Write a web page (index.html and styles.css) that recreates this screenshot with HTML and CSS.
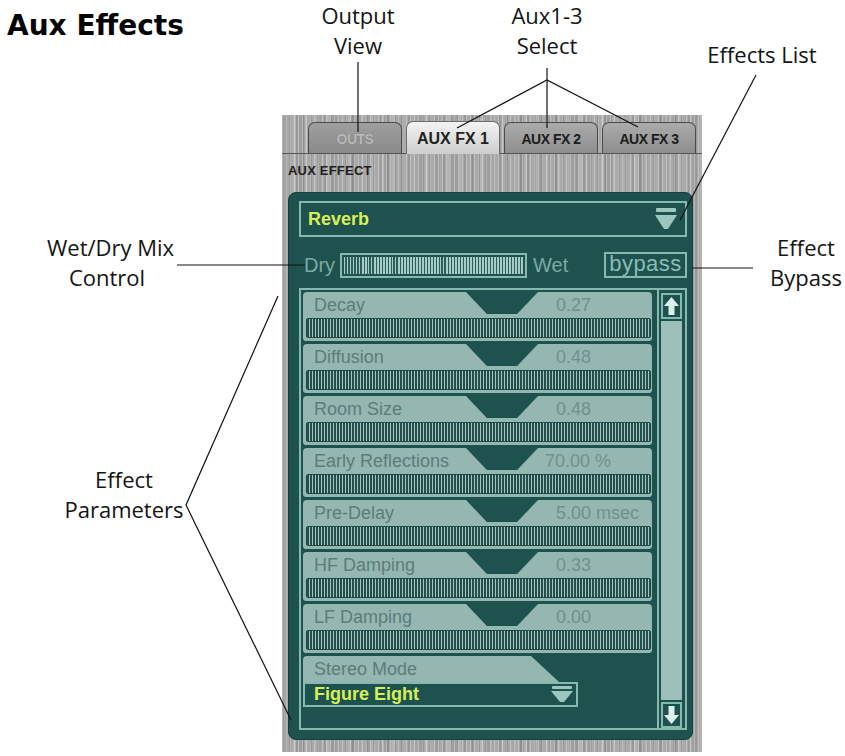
FILE: index.html
```html
<!DOCTYPE html>
<html>
<head>
<meta charset="utf-8">
<title>Aux Effects</title>
<link rel="stylesheet" href="styles.css">
</head>
<body>
<div class="page">
  <h1 class="title">Aux Effects</h1>

  <div class="mixer">
    <div class="tabs">
      <div class="tab outs">OUTS</div>
      <div class="tab active">AUX FX 1</div>
      <div class="tab">AUX FX 2</div>
      <div class="tab">AUX FX 3</div>
    </div>
    <div class="aux-label">AUX EFFECT</div>

    <div class="fx">
      <div class="select">
        <span class="select-text">Reverb</span>
        <svg class="drop" width="22" height="23" viewBox="0 0 22 23"><rect x="1" y="0" width="20" height="4" rx="1"/><polygon points="0,7 22,7 13,21 9,21"/></svg>
      </div>

      <div class="mix">
        <span class="mix-text dry">Dry</span>
        <div class="mix-slider"><div class="mix-stripes"></div></div>
        <span class="mix-text wet">Wet</span>
        <div class="bypass">bypass</div>
      </div>

      <div class="list">
        <div class="params">
          <div class="param">
            <div class="param-head"><span class="name">Decay</span><span class="notch"></span><span class="val">0.27</span></div>
            <div class="bar"></div>
          </div>
          <div class="param">
            <div class="param-head"><span class="name">Diffusion</span><span class="notch"></span><span class="val">0.48</span></div>
            <div class="bar"></div>
          </div>
          <div class="param">
            <div class="param-head"><span class="name">Room Size</span><span class="notch"></span><span class="val">0.48</span></div>
            <div class="bar"></div>
          </div>
          <div class="param">
            <div class="param-head"><span class="name">Early Reflections</span><span class="notch"></span><span class="val wide">70.00 %</span></div>
            <div class="bar"></div>
          </div>
          <div class="param">
            <div class="param-head"><span class="name">Pre-Delay</span><span class="notch"></span><span class="val">5.00 msec</span></div>
            <div class="bar"></div>
          </div>
          <div class="param">
            <div class="param-head"><span class="name">HF Damping</span><span class="notch"></span><span class="val">0.33</span></div>
            <div class="bar"></div>
          </div>
          <div class="param">
            <div class="param-head"><span class="name">LF Damping</span><span class="notch"></span><span class="val">0.00</span></div>
            <div class="bar"></div>
          </div>
          <div class="mode">
            <div class="mode-head">Stereo Mode</div>
            <div class="mode-select">
              <span class="select-text">Figure Eight</span>
              <svg class="drop small" width="22" height="17" viewBox="0 0 22 17"><rect x="1" y="0" width="20" height="3" rx="1"/><polygon points="0,5 22,5 13,16 9,16"/></svg>
            </div>
          </div>
        </div>
        <div class="scroll">
          <div class="scroll-btn">
            <svg width="17" height="20" viewBox="0 0 17 20"><polygon points="8.5,1 16,10 11.5,10 11.5,19 5.5,19 5.5,10 1,10"/></svg>
          </div>
          <div class="scroll-track"></div>
          <div class="scroll-btn">
            <svg width="17" height="20" viewBox="0 0 17 20"><polygon points="8.5,19 16,10 11.5,10 11.5,1 5.5,1 5.5,10 1,10"/></svg>
          </div>
        </div>
      </div>
    </div>
  </div>

  <div class="callout c-output">Output<br>View</div>
  <div class="callout c-select">Aux1-3<br>Select</div>
  <div class="callout c-list">Effects List</div>
  <div class="callout c-mix">Wet/Dry Mix<br>Control</div>
  <div class="callout c-bypass">Effect<br>Bypass</div>
  <div class="callout c-params">Effect<br>Parameters</div>

  <svg class="leaders" width="845" height="756" viewBox="0 0 845 756">
    <g stroke="#111" stroke-width="1.2" fill="none">
      <line x1="358" y1="62" x2="358" y2="132"/>
      <path d="M457 128 L547 80 L638 127"/>
      <line x1="547" y1="68" x2="547" y2="128"/>
      <line x1="756" y1="75" x2="680" y2="220"/>
      <line x1="177" y1="265" x2="305" y2="265"/>
      <line x1="692" y1="268" x2="753" y2="268"/>
      <path d="M278 296 L186 505 L291 720"/>
    </g>
  </svg>
</div>
</body>
</html>
```

FILE: styles.css
```css
* { box-sizing: border-box; }

body {
  margin: 0;
  background: #ffffff;
}

.page {
  position: relative;
  width: 845px;
  height: 756px;
  overflow: hidden;
  font-family: "Liberation Sans", Arial, sans-serif;
}

.title {
  margin: 0;
  padding: 12px 0 0 7px;
  height: 40px;
  font-family: "DejaVu Sans", sans-serif;
  font-weight: bold;
  font-size: 28px;
  line-height: 28px;
  color: #050505;
}

/* ---------- mixer panel ---------- */
.mixer {
  width: 420px;
  height: 637px;
  margin: 75px 0 0 282px;
  display: flex;
  flex-direction: column;
  background-color: #a9a9a9;
  background-image:
    repeating-linear-gradient(90deg, rgba(255,255,255,0.28) 0 1px, transparent 1px 4px),
    repeating-linear-gradient(90deg, rgba(0,0,0,0.10) 0 2px, transparent 2px 7px),
    repeating-linear-gradient(90deg, rgba(255,255,255,0.14) 0 3px, transparent 3px 11px),
    repeating-linear-gradient(90deg, rgba(0,0,0,0.06) 0 5px, transparent 5px 17px);
}

.tabs {
  display: flex;
  align-items: flex-end;
  gap: 4px;
  height: 39px;
  padding: 7px 0 0 26px;
  border-bottom: 1px solid #555555;
}

.tab {
  width: 94px;
  height: 31px;
  display: flex;
  align-items: center;
  justify-content: center;
  padding-top: 2px;
  border: 1.5px solid #4a4a4a;
  border-bottom: none;
  border-radius: 7px 7px 0 0;
  background: linear-gradient(#ababab, #8e8e8e);
  font-weight: bold;
  font-size: 14px;
  letter-spacing: -0.5px;
  color: #1c1c1c;
}

.tab.outs {
  background: linear-gradient(#9f9f9f, #8a8a8a);
  color: #b9b9b9;
  text-shadow: 0 0 1px #6a6a6a;
}

.tab.active {
  height: 33px;
  margin-bottom: -1px;
  position: relative;
  border-color: #6d6d6d;
  background: linear-gradient(#f4f4f4, #cdcdcd);
  font-size: 16px;
  letter-spacing: 0;
  color: #222222;
}

.aux-label {
  margin: 10px 0 0 6px;
  height: 13px;
  font-weight: bold;
  font-size: 13px;
  line-height: 13px;
  letter-spacing: 0.2px;
  color: #1e1e1e;
}

/* ---------- teal effect panel ---------- */
.fx {
  margin: 15px 9px 0 6px;
  height: 548px;
  padding: 9px 5px 0 10px;
  background: #1d524f;
  border: 1px solid #143f3d;
  border-radius: 8px;
  display: flex;
  flex-direction: column;
}

.select {
  height: 36px;
  margin-top: -1px;
  border: 2px solid #86b8b0;
  display: flex;
  align-items: center;
  justify-content: space-between;
  padding: 0 8px 0 7px;
}

.select-text {
  font-weight: bold;
  font-size: 18px;
  color: #d8ef58;
}

.drop { fill: #9cc7bf; }

.mix {
  margin-top: 15px;
  height: 26px;
  display: flex;
  align-items: center;
  padding-left: 5px;
}

.mix-text {
  font-size: 20px;
  color: #7ea9a3;
  line-height: 1;
}

.dry { width: 36px; }
.wet { margin-left: 6px; }

.mix-slider {
  width: 187px;
  height: 25px;
  border: 2px solid #86b8b0;
  padding: 2px;
}

.mix-stripes {
  height: 100%;
  background: repeating-linear-gradient(90deg, #a6ccc5 0 1.5px, #2b5f5b 1.5px 3px);
}

.bypass {
  margin-left: auto;
  width: 83px;
  height: 26px;
  border: 2px solid #86b8b0;
  display: flex;
  align-items: center;
  justify-content: center;
  font-size: 22px;
  line-height: 1;
  letter-spacing: 0.5px;
  color: #8bbdb5;
  padding-bottom: 3px;
}

/* ---------- parameter list ---------- */
.list {
  margin-top: 10px;
  height: 442px;
  border: 2px solid #86b8b0;
  display: flex;
}

.params {
  flex: 1;
  padding: 2px 5px 0 2px;
  display: flex;
  flex-direction: column;
  gap: 3px;
}

.param {
  height: 49px;
  background: #94b7b2;
  border-radius: 4px 4px 3px 3px;
  display: flex;
  flex-direction: column;
}

.param-head {
  height: 25px;
  display: grid;
  grid-template-columns: 152px 72px 1fr;
  padding-left: 11px;
}

.name, .val {
  font-size: 18px;
  line-height: 25px;
  padding-top: 1px;
  color: #5b7d79;
  white-space: nowrap;
}

.val {
  padding-left: 18px;
  color: #6f918d;
}

.val.wide { margin-left: -11px; }

.notch {
  height: 22px;
  background: #1d524f;
  clip-path: polygon(0 0, 100% 0, 71% 100%, 29% 100%);
}

.bar {
  height: 20px;
  margin: 1px 1px 3px 3px;
  border: 1px solid #1a4946;
  border-radius: 2px;
  background: repeating-linear-gradient(90deg, #244f4c 0 2px, #a4c4c0 2px 3px);
}

.mode {
  display: flex;
  flex-direction: column;
}

.mode-head {
  width: 275px;
  height: 26px;
  padding-left: 11px;
  background: #94b7b2;
  border-radius: 4px 0 0 0;
  clip-path: polygon(0 0, 228px 0, 256px 100%, 0 100%);
  font-size: 18px;
  line-height: 26px;
  color: #5b7d79;
}

.mode-select {
  width: 275px;
  height: 25px;
  border: 2px solid #86b8b0;
  display: flex;
  align-items: center;
  justify-content: space-between;
  padding: 0 3px 0 9px;
}

/* ---------- scroll bar ---------- */
.scroll {
  width: 28px;
  border-left: 2px solid #86b8b0;
  padding: 3px 3px 0 2px;
  display: flex;
  flex-direction: column;
}

.scroll-btn {
  height: 26px;
  border: 2px solid #86b8b0;
  background: #1d524f;
  display: flex;
  align-items: center;
  justify-content: center;
}

.scroll-btn svg { fill: #dcefeb; }

.scroll-track {
  flex: 1;
  margin: 2px 0;
  background: #9dbfba;
}

/* ---------- callouts ---------- */
.callout {
  position: absolute;
  font-family: "Open Sans", "DejaVu Sans", sans-serif;
  font-size: 22px;
  line-height: 30px;
  font-weight: 400;
  color: #141414;
  text-align: center;
  white-space: nowrap;
}

.c-output { left: 308px; top: 0; width: 100px; }
.c-select { left: 497px; top: 0; width: 100px; }
.c-list   { left: 702px; top: 39px; width: 120px; }
.c-mix    { left: 47px;  top: 232px; width: 120px; }
.c-bypass { left: 766px; top: 232px; width: 80px; }
.c-params { left: 64px;  top: 464px; width: 120px; }

.leaders {
  position: absolute;
  left: 0;
  top: 0;
  pointer-events: none;
}
```
